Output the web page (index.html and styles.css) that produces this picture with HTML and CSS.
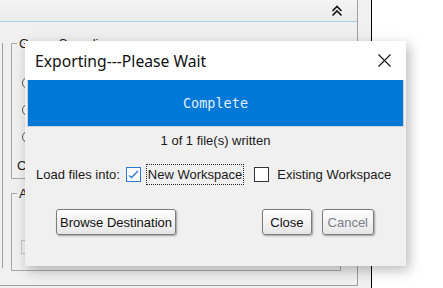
FILE: index.html
```html
<!DOCTYPE html>
<html lang="en">

<head>
  <meta charset="UTF-8">
  <meta name="viewport" content="width=device-width, initial-scale=1.0">
  <title>Exporting</title>
  <link rel="stylesheet" href="styles.css">
</head>

<body>
  <div class="app">
    <div class="frame">
      <div class="topbar">
        <svg class="collapse" width="12" height="12" viewBox="0 0 12 12">
          <path d="M1.5 6 L6 1.5 L10.5 6 M1.5 10.5 L6 6 L10.5 10.5" fill="none" stroke="#111" stroke-width="1.6"/>
        </svg>
      </div>

      <div class="content">
        <div class="pane">
          <!-- Sampling group (mostly hidden by the dialog) -->
          <div class="group group-sampling">
            <span class="legend">Group Sampling</span>
            <div class="radio checked"></div>
            <div class="radio"></div>
            <div class="radio"></div>
            <div class="group-note">C</div>
          </div>

          <div class="group group-apply">
            <span class="legend">A</span>
            <button class="bg-btn">C</button>
            <div class="bg-check"></div>
          </div>
        </div>
      </div>
    </div>
  </div>

  <!-- Export dialog -->
  <div class="dialog">
    <div class="dialog-title">
      <span>Exporting---Please Wait</span>
      <svg width="13" height="13" viewBox="0 0 13 13">
        <path d="M0.5 0.5 L12.5 12.5 M12.5 0.5 L0.5 12.5" stroke="#111" stroke-width="1.1"/>
      </svg>
    </div>

    <div class="progress">
      <div class="progress-bar">Complete</div>
    </div>

    <div class="status">1 of 1 file(s) written</div>

    <div class="load-row">
      <span>Load files into:</span>
      <span class="check on">
        <svg width="11" height="9" viewBox="0 0 11 9">
          <path d="M1 5.5 L3.5 7.5 L10 1" fill="none" stroke="#2a78d8" stroke-width="1.4"/>
        </svg>
      </span>
      <span class="check-label focused">New Workspace</span>
      <span class="check"></span>
      <span class="check-label">Existing Workspace</span>
    </div>

    <div class="button-row">
      <button class="btn narrow">Browse Destination</button>
      <div class="spacer"></div>
      <button class="btn wide">Close</button>
      <button class="btn disabled">Cancel</button>
    </div>
  </div>
</body>

</html>
```

FILE: styles.css
```css
body {
  margin: 0;
  padding: 0;
  width: 443px;
  height: 288px;
  overflow: hidden;
  background-color: #fff;
  font-family: "Liberation Sans", Arial, sans-serif;
  font-size: 13px;
  color: #1a1a1a;
  position: relative;
}

/* Background application window */
.app {
  width: 371px;
  height: 288px;
  background-color: #f0f0f0;
  border-right: 1px solid #000;
}

.frame {
  width: 357px;
  height: 285px;
  border-right: 1px solid #a0a0a0;
  border-bottom: 1px solid #a0a0a0;
}

.topbar {
  height: 21px;
  background: linear-gradient(#f4f4f4, #ebebeb);
  border-bottom: 1px solid #a6cde0;
  display: flex;
  justify-content: flex-end;
  align-items: center;
  padding-right: 14px;
}

.content {
  padding-top: 21px;
}

.pane {
  margin-left: 2px;
  height: 225px;
  border-left: 1px solid #a0a0a0;
  padding-left: 8px;
}

.group {
  border: 1px solid #a8a8a8;
  position: relative;
  padding: 8px 5px 0;
}

.legend {
  display: inline-block;
  margin-top: -16px;
  padding: 0 2px;
  background-color: #f0f0f0;
  color: #1a1a1a;
  vertical-align: top;
}

.group-sampling {
  width: 330px;
  height: 126px;
}

.radio {
  width: 10px;
  height: 10px;
  border: 1px solid #555;
  border-radius: 50%;
  background: #fff;
  margin: 10px 0 15px 5px;
}

.radio.checked {
  background: radial-gradient(#222 40%, #fff 50%);
}

.group-note {
  margin-top: 2px;
}

.group-apply {
  margin-top: 14px;
  width: 318px;
  height: 68px;
}

.bg-btn {
  margin-top: 3px;
  width: 60px;
  height: 24px;
  border: 1px solid #888;
  border-radius: 3px;
  background: linear-gradient(#fff, #e8e8e8);
  font-family: inherit;
  font-size: 13px;
  text-align: left;
}

.bg-check {
  width: 10px;
  height: 12px;
  border: 1px solid #c8c8c8;
  margin: 11px 0 0 4px;
}

/* Export dialog, floats over the app */
.dialog {
  position: absolute;
  left: 25px;
  top: 41px;
  width: 381px;
  height: 225px;
  background-color: #f0f0f0;
  box-shadow: 3px 4px 12px rgba(0, 0, 0, 0.28);
}

.dialog-title {
  height: 39px;
  background-color: #fff;
  display: flex;
  justify-content: space-between;
  align-items: center;
  padding: 0 15px 0 10px;
  font-family: "Noto Sans", "Open Sans", sans-serif;
  font-size: 15.7px;
  color: #111;
}

.progress {
  margin: 0 2px;
  border: 1px solid #d0d0d0;
  border-top: none;
}

.progress-bar {
  height: 46px;
  background-color: #0078d7;
  color: #e2eef9;
  font-family: "DejaVu Sans Mono", "Liberation Mono", monospace;
  font-size: 13.5px;
  display: flex;
  align-items: center;
  justify-content: center;
}

.status {
  text-align: center;
  padding-top: 6px;
  line-height: 15px;
}

.load-row {
  margin-top: 17px;
  padding-left: 11px;
  height: 19px;
  display: flex;
  align-items: center;
}

.check {
  width: 13px;
  height: 13px;
  border: 1px solid #333;
  background-color: #fff;
  margin: 0 6px 0 10px;
  display: flex;
  align-items: center;
  justify-content: center;
}

.check.on {
  border-color: #2a78d8;
  margin-left: 6px;
  margin-right: 5px;
}

.check-label {
  padding: 1px 1px;
  line-height: 17px;
  border: 1px dotted transparent;
}

.check-label.focused {
  border-color: #222;
}

.button-row {
  margin-top: 25px;
  padding: 0 32px 0 31px;
  display: flex;
  gap: 10px;
}

.spacer {
  flex-grow: 1;
}

.btn {
  height: 26px;
  padding: 0 5px;
  border: 1px solid #7c7c7c;
  border-radius: 3px;
  background: linear-gradient(#ffffff, #e6e6e6);
  box-shadow: 1px 1px 2px rgba(0, 0, 0, 0.35);
  font-family: "Liberation Sans", Arial, sans-serif;
  font-size: 13px;
  color: #111;
  cursor: pointer;
}

.btn.narrow {
  padding: 0 3px;
}

.btn.wide {
  padding: 0 7px;
}

.btn.disabled {
  color: #7d7d8a;
}
```
